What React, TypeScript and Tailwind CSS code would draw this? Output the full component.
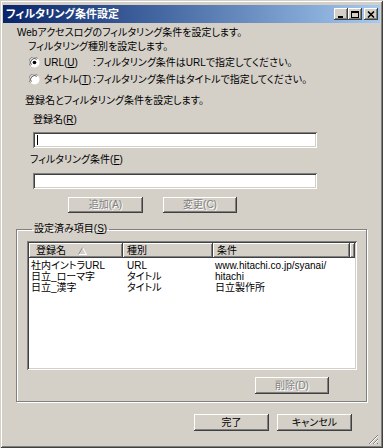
const font = "[font-family:'Liberation_Sans','Noto_Sans_CJK_JP',sans-serif] [font-feature-settings:'palt']";
const raised =
  "shadow-[inset_-1px_-1px_#404040,inset_1px_1px_#ffffff,inset_-2px_-2px_#808080,inset_2px_2px_#d4d0c8]";
const sunken =
  "shadow-[inset_1px_1px_#808080,inset_-1px_-1px_#ffffff,inset_2px_2px_#404040,inset_-2px_-2px_#d4d0c8]";
const disabledText = "text-[#808080] [text-shadow:1px_1px_0_#ffffff]";

const rows = [
  { name: "社内イントラURL", kind: "URL", cond: "www.hitachi.co.jp/syanai/" },
  { name: "日立_ローマ字", kind: "タイトル", cond: "hitachi" },
  { name: "日立_漢字", kind: "タイトル", cond: "日立製作所" },
];

function Radio({ checked }: { checked?: boolean }) {
  return (
    <svg width="11" height="11" viewBox="0 0 12 12" className="shrink-0">
      <circle cx="6" cy="6" r="5.5" fill="#ffffff" />
      <path d="M1.5 9.5 A5.5 5.5 0 0 1 9.5 1.5" stroke="#808080" strokeWidth="1" fill="none" />
      <path d="M2.5 8.5 A4.3 4.3 0 0 1 8.5 2.5" stroke="#404040" strokeWidth="1" fill="none" />
      {checked && <circle cx="6" cy="6" r="2" fill="#000000" />}
    </svg>
  );
}

function Button({
  label,
  disabled,
  className = "",
}: {
  label: string;
  disabled?: boolean;
  className?: string;
}) {
  return (
    <div
      className={`flex items-center justify-center bg-[#d4d0c8] ${raised} ${
        disabled ? disabledText : "text-black"
      } ${className}`}
    >
      {label}
    </div>
  );
}

function CaptionButton({ kind }: { kind: "min" | "max" | "close" }) {
  return (
    <div className={`flex h-[12px] w-[14px] items-center justify-center bg-[#d4d0c8] ${raised}`}>
      <svg width="8" height="7" viewBox="0 0 8 7">
        {kind === "min" && <rect x="1" y="5" width="5" height="2" fill="#000" />}
        {kind === "max" && (
          <>
            <rect x="0.5" y="0.5" width="7" height="6" fill="none" stroke="#000" />
            <rect x="0" y="0" width="8" height="2" fill="#000" />
          </>
        )}
        {kind === "close" && (
          <path d="M1 0.5 L7 6.5 M7 0.5 L1 6.5" stroke="#000" strokeWidth="1.6" />
        )}
      </svg>
    </div>
  );
}

export default function App() {
  return (
    <div
      className={`flex h-[448px] w-[383px] flex-col bg-[#d4d0c8] px-[3px] pt-[5px] text-[10px] leading-[14px] text-black ${font} shadow-[inset_1px_1px_#d4d0c8,inset_-1px_-1px_#404040,inset_2px_2px_#ffffff,inset_-2px_-2px_#808080]`}
    >
      {/* title bar */}
      <div className="flex h-[18px] items-center justify-between bg-linear-to-r from-[#0a246a] to-[#a6caf0] pl-[3px] pr-[2px]">
        <span className="text-[11px] font-bold text-white">フィルタリング条件設定</span>
        <div className="flex items-center">
          <CaptionButton kind="min" />
          <CaptionButton kind="max" />
          <div className="w-[2px]" />
          <CaptionButton kind="close" />
        </div>
      </div>

      <div className="flex flex-1 flex-col pl-[13px]">
        <p className="ml-[1px] mt-[3px]">Webアクセスログのフィルタリング条件を設定します。</p>
        <p className="ml-[12px]">フィルタリング種別を設定します。</p>

        <div className="ml-[13px] grid grid-cols-[64px_1fr] whitespace-nowrap">
          <div className="flex h-[17px] items-center gap-[4px]">
            <Radio checked />
            <span>URL(<span className="underline">U</span>)</span>
          </div>
          <div className="flex h-[17px] items-center">:フィルタリング条件はURLで指定してください。</div>
          <div className="flex h-[17px] items-center gap-[4px]">
            <Radio />
            <span>タイトル(<span className="underline">T</span>)</span>
          </div>
          <div className="flex h-[17px] items-center">:フィルタリング条件はタイトルで指定してください。</div>
        </div>

        <p className="ml-[9px] mt-[6px]">登録名とフィルタリング条件を設定します。</p>
        <p className="ml-[17px] mt-[5px]">
          登録名(<span className="underline">R</span>)
        </p>
        <div className={`ml-[17px] mt-[5px] flex h-[16px] w-[284px] items-center bg-white pl-[4px] ${sunken}`}>
          <div className="h-[10px] w-px bg-black" />
        </div>
        <p className="ml-[14px] mt-[5px]">
          フィルタリング条件(<span className="underline">F</span>)
        </p>
        <div className={`ml-[17px] mt-[6px] h-[16px] w-[284px] bg-white ${sunken}`} />

        <div className="ml-[52px] mt-[8px] flex gap-[20px]">
          <Button label="追加(A)" disabled className="h-[16px] w-[75px]" />
          <Button label="変更(C)" disabled className="h-[16px] w-[74px]" />
        </div>

        <fieldset className="mt-[9px] flex w-[351px] flex-col border border-[#808080] pb-[7px] pl-[10px] shadow-[inset_1px_1px_#ffffff,1px_1px_#ffffff]">
          <legend className="ml-[5px] px-[2px]">
            設定済み項目(<span className="underline">S</span>)
          </legend>

          <div className={`mt-[5px] flex h-[129px] w-[330px] flex-col bg-white p-[2px] ${sunken}`}>
            <div className="flex h-[15px] shrink-0 bg-[#d4d0c8]">
              <div className={`flex w-[94px] items-center pl-[7px] ${raised}`}>
                <span>登録名</span>
                <svg width="9" height="8" viewBox="0 0 9 8" className="ml-[12px]">
                  <path d="M4.5 0.5 L8.5 7.5 L0.5 7.5 Z" fill="none" stroke="#ffffff" />
                  <path d="M4.5 0.5 L0.5 7.5" stroke="#808080" />
                </svg>
              </div>
              <div className={`flex w-[90px] items-center pl-[4px] ${raised}`}>種別</div>
              <div className={`flex w-[137px] items-center pl-[4px] ${raised}`}>条件</div>
              <div className={`flex-1 ${raised}`} />
            </div>
            <div className="flex flex-col pt-[2px] leading-[11px]">
              {rows.map((r) => (
                <div key={r.name} className="flex h-[11px] whitespace-nowrap">
                  <span className="w-[96px] pl-[2px]">{r.name}</span>
                  <span className="w-[89px] pl-[2px]">{r.kind}</span>
                  <span className="pl-[1px]">{r.cond}</span>
                </div>
              ))}
            </div>
          </div>

          <Button label="削除(D)" disabled className="ml-[228px] mt-[7px] h-[17px] w-[74px]" />
        </fieldset>

        <div className="mr-[28px] mt-[12px] flex justify-end gap-[8px]">
          <Button label="完了" className="h-[17px] w-[75px]" />
          <Button label="キャンセル" className="h-[17px] w-[75px]" />
        </div>

        <div className="mb-[3px] mr-[1px] mt-auto flex justify-end">
          <svg width="11" height="11" viewBox="0 0 11 11">
            <path d="M10 1 L1 10 M10 5 L5 10 M10 9 L9 10" stroke="#808080" strokeWidth="1" />
            <path d="M10 2 L2 10 M10 6 L6 10" stroke="#ffffff" strokeWidth="1" />
          </svg>
        </div>
      </div>
    </div>
  );
}
